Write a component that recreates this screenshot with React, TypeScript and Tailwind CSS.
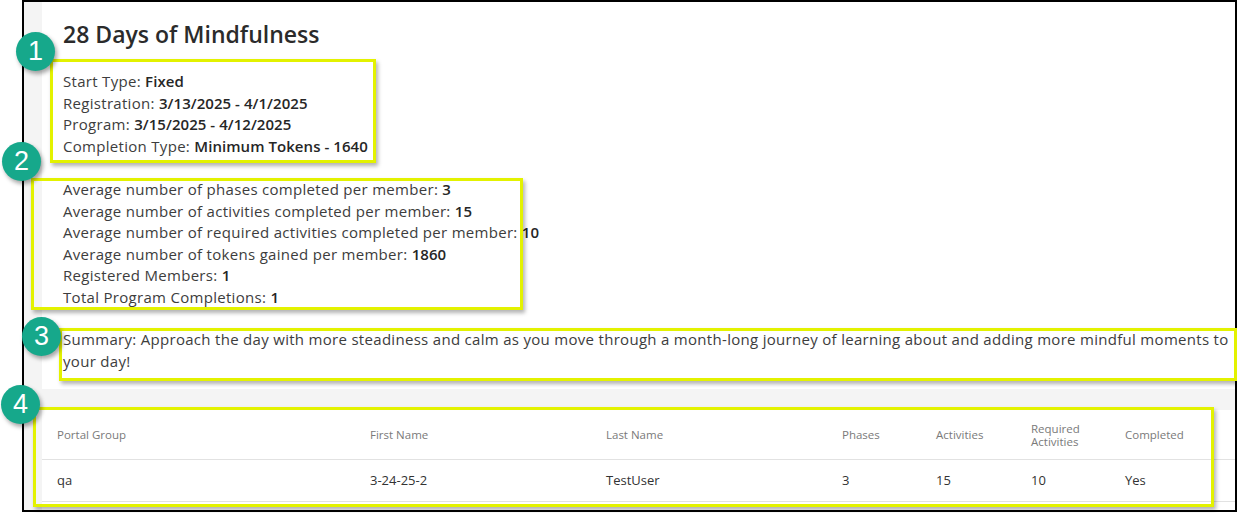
import React from "react";

const font = { fontFamily: '"Open Sans", "Liberation Sans", sans-serif' };

const info = [
  { label: "Start Type:", value: "Fixed" },
  { label: "Registration:", value: "3/13/2025 - 4/1/2025" },
  { label: "Program:", value: "3/15/2025 - 4/12/2025" },
  { label: "Completion Type:", value: "Minimum Tokens - 1640" },
];

const stats = [
  { label: "Average number of phases completed per member:", value: "3" },
  { label: "Average number of activities completed per member:", value: "15" },
  { label: "Average number of required activities completed per member:", value: "10" },
  { label: "Average number of tokens gained per member:", value: "1860" },
  { label: "Registered Members:", value: "1" },
  { label: "Total Program Completions:", value: "1" },
];

const headers = ["Portal Group", "First Name", "Last Name", "Phases", "Activities", "Required Activities", "Completed"];
const row = ["qa", "3-24-25-2", "TestUser", "3", "15", "10", "Yes"];

function Line({ label, value }: { label: string; value: string }) {
  return (
    <div className="whitespace-nowrap">
      {label} <span className="font-semibold tracking-[0.05px] text-[#262626]">{value}</span>
    </div>
  );
}

function Marker({ n, className }: { n: number; className: string }) {
  return (
    <div
      className={`absolute w-[39px] h-[39px] rounded-full bg-[#16a88b] text-white flex items-center justify-center text-[27px] shadow-[2px_3px_4px_rgba(0,0,0,0.35)] ${className}`}
      style={{ fontFamily: '"Liberation Sans", Arial, sans-serif' }}
    >
      {n}
    </div>
  );
}

function Callout({ className }: { className: string }) {
  return <div className={`absolute border-[3px] border-[#e3f200] shadow-[2px_3px_4px_rgba(0,0,0,0.3)] pointer-events-none ${className}`} />;
}

export default function App() {
  return (
    <div className="relative w-[1237px] h-[513px] bg-white pl-[22px] overflow-hidden" style={font}>
      <div className="h-[512px] w-[1215px] border-2 border-black bg-[#f4f4f4] pl-[18px] flex flex-col overflow-hidden">
        {/* program card */}
        <section className="bg-white pl-[21px] pt-[16px] pb-[17px] text-[15px] tracking-[0.3px] leading-[21.5px] text-[#3d3d3d]">
          <h1 className="text-[23px] leading-[32px] tracking-normal font-semibold text-[#2b2b2b]">28 Days of Mindfulness</h1>
          <div className="mt-[21px]">
            {info.map((l) => (
              <Line key={l.label} {...l} />
            ))}
          </div>
          <div className="mt-[22px]">
            {stats.map((l) => (
              <Line key={l.label} {...l} />
            ))}
          </div>
          <p className="mt-[21px] pr-[2px]">
            Summary: Approach the day with more steadiness and calm as you move through a month-long journey of learning about and adding more mindful moments to your day!
          </p>
        </section>

        {/* members table */}
        <section className="mt-[21px] bg-white flex-1">
          <div className="grid grid-cols-[313px_236px_236px_94px_95px_94px_1fr] h-[50px] items-center border-b border-[#e2e2e2] text-[11.5px] leading-[13px] text-[#7a7a7a]">
            {headers.map((h) => (
              <div key={h} className="pl-[15px]">
                {h === "Required Activities" ? (
                  <>
                    Required
                    <br />
                    Activities
                  </>
                ) : (
                  h
                )}
              </div>
            ))}
          </div>
          <div className="grid grid-cols-[313px_236px_236px_94px_95px_94px_1fr] h-[42px] items-center border-b border-[#e2e2e2] text-[13px] text-[#333]">
            {row.map((c, i) => (
              <div key={i} className="pl-[15px]">
                {c}
              </div>
            ))}
          </div>
        </section>
      </div>

      {/* annotations */}
      <Callout className="left-[50px] top-[59px] w-[326px] h-[104px]" />
      <Callout className="left-[31px] top-[178px] w-[492px] h-[132px]" />
      <Callout className="left-[59px] top-[328px] w-[1178px] h-[53px]" />
      <Callout className="left-[33px] top-[407px] w-[1181px] h-[100px]" />
      <Marker n={1} className="left-[16px] top-[32px]" />
      <Marker n={2} className="left-[2px] top-[142px]" />
      <Marker n={3} className="left-[22px] top-[317px]" />
      <Marker n={4} className="left-[1px] top-[385px]" />
    </div>
  );
}
